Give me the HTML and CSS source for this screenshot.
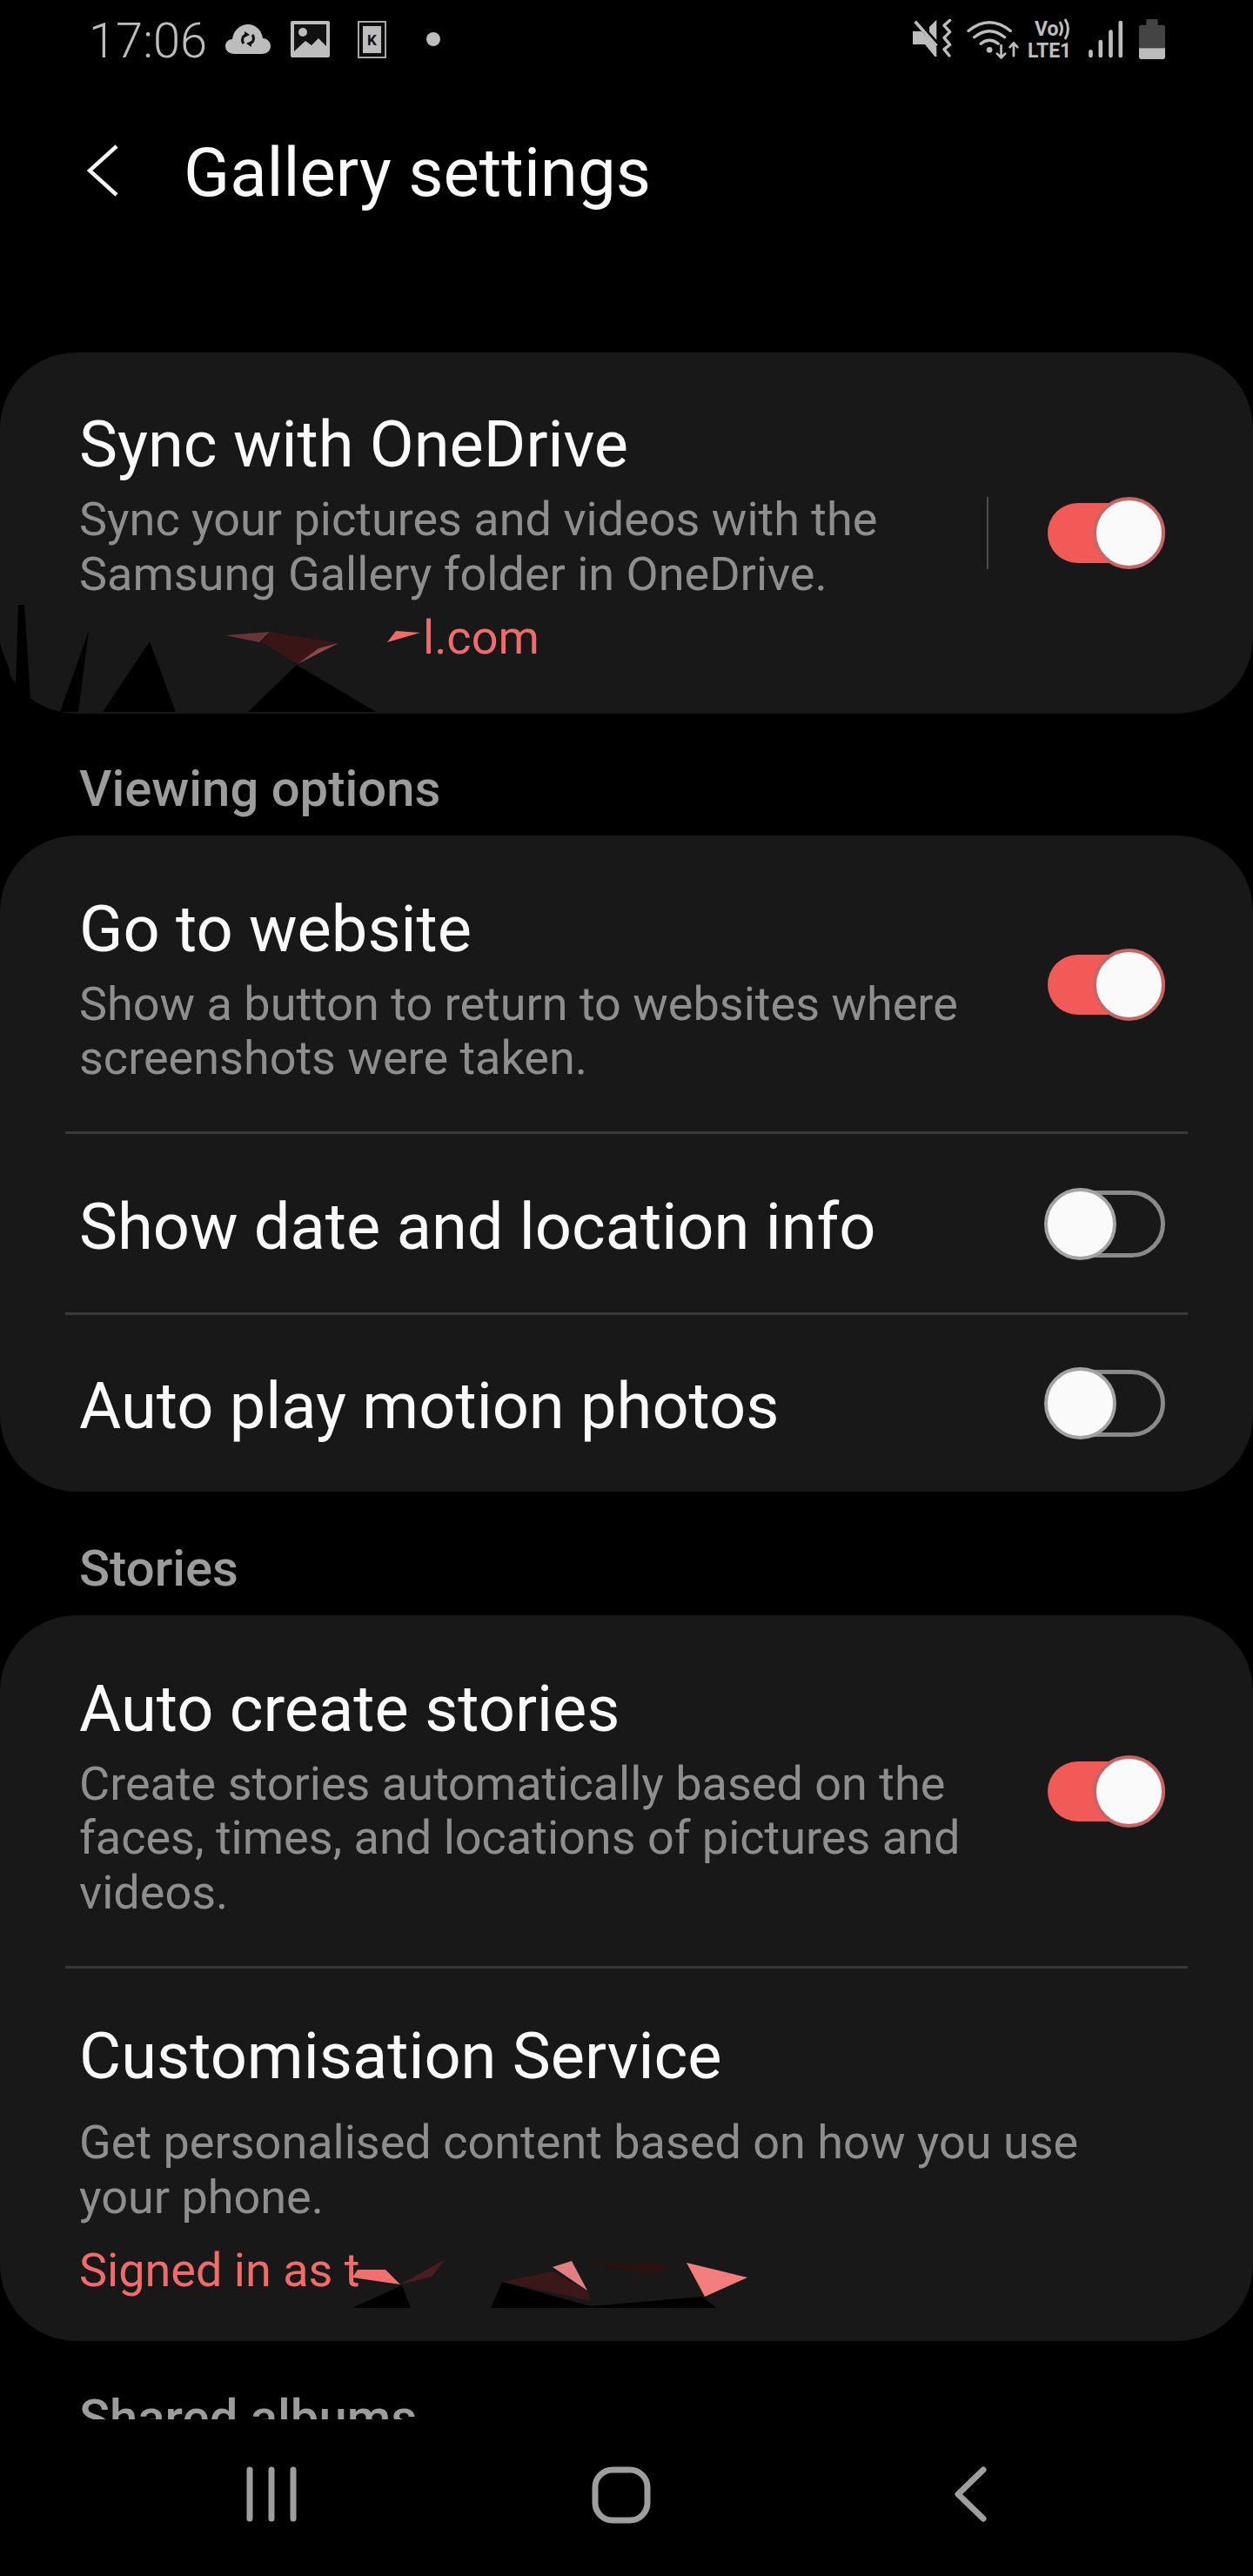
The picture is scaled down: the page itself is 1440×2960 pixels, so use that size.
FILE: index.html
```html
<!DOCTYPE html>
<html lang="en">
<head>
<meta charset="utf-8">
<title>Gallery settings</title>
<link rel="stylesheet" href="styles.css">
</head>
<body>
<div class="phone">
  <header class="status">
    <div class="status-left">
      <span class="clock">17:06</span>
      <svg class="ic-cloud" viewBox="0 0 52 34"><path fill="#bdbdbd" d="M11 34C4 34 0 30 0 25c0-5 4-8 8-8 1-9 8-17 18-17 9 0 16 7 17 16 5 0 9 4 9 9 0 5-4 9-10 9z"/><path fill="none" stroke="#111" stroke-width="3" d="M21 22c-3-4-1-9 3-10M31 12c3 4 1 9-3 10"/><path fill="#111" d="M22 8l6 4-6 3zM30 26l-6-4 6-3z"/></svg>
      <svg class="ic-image" viewBox="0 0 45 42"><rect width="45" height="42" rx="2" fill="#bdbdbd"/><path fill="#111" d="M4 4h37v25l-9-9-8 8-7-5-13 12z"/><circle cx="14" cy="13" r="5" fill="#bdbdbd"/></svg>
      <svg class="ic-k" viewBox="0 0 33 43"><rect x="1" y="1" width="31" height="41" fill="none" stroke="#a8a8a8" stroke-width="2"/><rect x="5" y="5" width="23" height="33" fill="#bdbdbd" stroke="#111" stroke-width="2"/><text x="16.500" y="28" text-anchor="middle" class="k-letter">K</text></svg>
      <span class="dot"></span>
    </div>
    <div class="status-right">
      <svg class="ic-mute" viewBox="268 68 135 135"><path fill="#bdbdbd" d="M268 110h30l52 55v32h-6l-34-42h-42zM325 95l25-25v70l-25-28z"/><path stroke="#bdbdbd" stroke-width="11" d="M276 76l74 84" fill="none"/><path fill="none" stroke="#bdbdbd" stroke-width="10" stroke-linecap="round" stroke-linejoin="round" d="M396 72l-20 18 20 22-20 20 20 24-20 16 18 22"/></svg>
      <svg class="ic-wifi" viewBox="452 62 182 143"><g fill="none" stroke="#bdbdbd" stroke-width="10" stroke-linecap="round"><path d="M458 102Q530 44 602 102M478 124Q530 82 582 124M500 146Q530 122 560 146"/><path d="M570 152v40M556 180l14 14 14-14M613 188v-40M600 158l13-14 13 14" stroke-width="8"/></g><circle cx="530" cy="167" r="10" fill="#bdbdbd"/></svg>
      <svg class="ic-volte" viewBox="0 -4 58 54"><text x="8" y="19" class="volte-text">Vo</text><path d="M37 3q5 8 0 16M43 0q7 11 0 23" fill="none" stroke="#bdbdbd" stroke-width="3"/><text x="0" y="44" class="volte-text">LTE1</text></svg>
      <svg class="ic-signal" viewBox="868 68 122 135"><g stroke="#bdbdbd" stroke-width="14" stroke-linecap="round"><path d="M878 180v14M912 146v48M947 112v82M981 80v114"/></g></svg>
      <svg class="ic-battery" viewBox="1047 65 90 138"><path fill="#444" d="M1072 70q0-5 5-5h30q5 0 5 5v15h17q8 0 8 8v72h-90V93q0-8 8-8h17z"/><path fill="#bdbdbd" d="M1047 165h90v30q0 8-8 8h-74q-8 0-8-8z"/></svg>
    </div>
  </header>

  <div class="appbar">
    <svg class="back" viewBox="0 0 36 60"><path d="M34 2L3 30l31 28" fill="none" stroke="#f5f5f5" stroke-width="4.500"/></svg>
    <h1 class="page-title">Gallery settings</h1>
  </div>

  <main class="scroll">
    <section class="card card-sync">
      <div class="row row-sync">
        <div class="row-text">
          <div class="title">Sync with OneDrive</div>
          <div class="sub">Sync your pictures and videos with the<br>Samsung Gallery folder in OneDrive.</div>
          <div class="link link-mail">l.com</div>
        </div>
        <span class="vbar"></span>
        <span class="toggle on"><span class="thumb"></span></span>
      </div>
      <svg class="redact redact-sync" viewBox="0 0 500 128">
        <g fill="#000">
          <path d="M0 50L11 80V128H0z"/>
          <path d="M21 5H28L36 128H17z"/>
          <path d="M102 35L90 128H69z"/>
          <path d="M172 47L202 128H118z"/>
          <path d="M341 74L432 128H285z"/>
        </g>
        <path fill="#6a3434" d="M259 40L310 36 298 48z"/>
        <path fill="#3a1515" d="M310 36L389 49 342 73 301 48z"/>
        <path fill="#8a4a4a" d="M342 73L389 49 366 55z"/>
        <path fill="#f26a6a" d="M445 48L455 35 483 37z"/>
      </svg>
    </section>

    <h2 class="section section-first">Viewing options</h2>
    <section class="card card-view">
      <div class="row row-web">
        <div class="row-text">
          <div class="title">Go to website</div>
          <div class="sub">Show a button to return to websites where<br>screenshots were taken.</div>
        </div>
        <span class="toggle on"><span class="thumb"></span></span>
      </div>
      <div class="row row-plain">
        <div class="row-text"><div class="title">Show date and location info</div></div>
        <span class="toggle off"><span class="thumb"></span></span>
      </div>
      <div class="row row-plain row-plain-last">
        <div class="row-text"><div class="title">Auto play motion photos</div></div>
        <span class="toggle off"><span class="thumb"></span></span>
      </div>
    </section>

    <h2 class="section">Stories</h2>
    <section class="card card-stories">
      <div class="row row-stories">
        <div class="row-text">
          <div class="title">Auto create stories</div>
          <div class="sub">Create stories automatically based on the<br>faces, times, and locations of pictures and<br>videos.</div>
        </div>
        <span class="toggle on"><span class="thumb"></span></span>
      </div>
      <div class="row row-custom">
        <div class="row-text">
          <div class="title">Customisation Service</div>
          <div class="sub sub-custom">Get personalised content based on how you use<br>your phone.</div>
          <div class="link link-signed">Signed in as t</div>
        </div>
      </div>
      <svg class="redact redact-stories" viewBox="0 0 900 70">
        <g fill="#000">
          <path d="M462 44L472 70H405z"/>
          <path d="M577 40L679 68 807 57 823 70H564z"/>
        </g>
        <path fill="#3a1818" d="M577 40L635 28 675 50 679 62z"/>
        <path fill="#2a1212" d="M670 18L772 19 752 32z"/>
        <path fill="#4a1e1e" d="M460 43L512 14 496 34z"/>
        <path fill="#f07070" d="M405 35L411 26H443L460 43z"/>
        <path fill="#e08080" d="M635 23L657 16 675 50z"/>
        <path fill="#f47d7d" d="M789 18L859 35 810 57z"/>
      </svg>
    </section>

    <h2 class="section">Shared albums</h2>
  </main>

  <nav class="navbar">
    <svg class="nav-recent" viewBox="0 0 58 64"><g stroke="#9e9e9e" stroke-width="7" stroke-linecap="round"><path d="M4 4v56M29 4v56M54 4v56"/></g></svg>
    <svg class="nav-home" viewBox="0 0 68 66"><rect x="4" y="4" width="60" height="58" rx="20" fill="none" stroke="#9e9e9e" stroke-width="7"/></svg>
    <svg class="nav-back" viewBox="0 0 38 64"><path d="M34 4L5 32l29 28" fill="none" stroke="#9e9e9e" stroke-width="7" stroke-linecap="round" stroke-linejoin="round"/></svg>
  </nav>
</div>
</body>
</html>
```

FILE: styles.css
```css
* { box-sizing: border-box; }
html, body { margin: 0; padding: 0; background: #000; }
body { font-family: Roboto, "Noto Sans", sans-serif; color: #fafafa; }
.phone { width: 1440px; height: 2960px; display: flex; flex-direction: column; overflow: hidden; background: #000; }

/* status bar */
.status { height: 90px; flex: none; display: flex; justify-content: space-between; align-items: flex-start; padding: 22px 101px 0 102px; }
.status-left, .status-right { display: flex; align-items: flex-start; }
.clock { font-size: 56px; line-height: 50px; color: #bdbdbd; width: 157px; font-weight: 300; }
.ic-cloud { width: 52px; height: 34px; margin-top: 6px; margin-right: 23px; }
.ic-image { width: 45px; height: 42px; margin-top: 2px; margin-right: 32px; }
.ic-k { width: 33px; height: 43px; margin-top: 2px; margin-right: 46px; }
.k-letter { font: 700 17px Roboto, sans-serif; fill: #111; }
.dot { width: 16px; height: 16px; border-radius: 50%; background: #bdbdbd; margin-top: 15px; }
.ic-mute { width: 45px; height: 45px; margin-right: 17px; }
.ic-wifi { width: 61px; height: 48px; margin-right: 9px; }
.ic-volte { width: 58px; height: 54px; margin-top: -4px; margin-right: 11px; }
.volte-text { font: 700 23px Roboto, sans-serif; fill: #bdbdbd; }
.ic-signal { width: 41px; height: 45px; margin-right: 18px; }
.ic-battery { width: 30px; height: 46px; }

/* app bar */
.appbar { height: 315px; flex: none; display: flex; align-items: flex-start; padding-left: 100px; }
.back { width: 36px; height: 60px; margin-top: 76px; margin-right: 75px; }
.page-title { margin: 64px 0 0; font-size: 78px; line-height: 90px; font-weight: 400; color: #fafafa; }

/* scrolling list */
.scroll { height: 2375px; flex: none; overflow: hidden; }
.card { position: relative; background: #181818; border-radius: 88px; }
.card-sync { height: 415px; }
.card-view { height: 754px; }
.card-stories { height: 834px; }
.section { margin: 0; height: 142px; padding: 34px 0 0 91px; font-size: 58px; line-height: 108px; font-weight: 500; color: #9c9c9c; }
.section-first { height: 140px; padding-top: 32px; }
.row { position: relative; display: flex; align-items: center; padding: 0 101px 0 91px; }
.row + .row::before { content: ""; position: absolute; top: -2px; left: 75px; right: 75px; height: 3px; background: #3a3a3a; }
.row-text { flex: 1; min-width: 0; }
.title { font-size: 74px; line-height: 84px; color: #fafafa; }
.sub { font-size: 54px; line-height: 62.500px; color: #8e8e8e; margin-top: 13px; }
.link { font-size: 54px; line-height: 62px; color: #f26b6b; }
.link-mail { padding-left: 395px; margin-top: 11px; }
.link-signed { margin-top: 22px; }
.sub-custom { margin-top: 26px; }

.row-sync { height: 415px; align-items: flex-start; padding-top: 64px; }
.row-web { height: 342px; }
.row-web .row-text { margin-top: 11px; }
.row-plain { height: 208px; }
.row-plain .row-text { padding-top: 7px; }
.row-plain-last { height: 204px; }
.row-stories { height: 405px; }
.row-stories .row-text { margin-top: 11px; }
.row-custom { height: 429px; align-items: flex-start; padding-top: 60px; }

.vbar { flex: none; width: 2px; height: 83px; background: #4a4a4a; margin: 102px 68px 0 0; }
.row-sync .toggle { margin-top: 109px; }

/* switches */
.toggle { position: relative; flex: none; display: block; width: 135px; height: 77px; border-radius: 40px; }
.toggle.on { background: #f25a57; height: 69px; }
.toggle.off { width: 133px; border: 5px solid #8a8a8a; }
.thumb { position: absolute; width: 83px; height: 83px; border-radius: 50%; background: #fafafa; }
.on .thumb { right: 0; top: -7px; border: 4px solid #c96464; }
.off .thumb { left: -11px; top: -8px; border: 4px solid #a3a3a3; }

/* smudged redaction marks */
.redact { position: absolute; left: 0; }
.redact-sync { top: 285px; width: 500px; height: 128px; }
.redact-stories { top: 726px; width: 900px; height: 70px; }

/* navigation bar */
.navbar { height: 180px; flex: none; display: flex; align-items: flex-start; padding: 54px 0 0 283px; }
.nav-recent { width: 58px; height: 64px; margin-right: 339px; }
.nav-home { width: 68px; height: 66px; margin-right: 348px; }
.nav-back { width: 38px; height: 64px; }
```
